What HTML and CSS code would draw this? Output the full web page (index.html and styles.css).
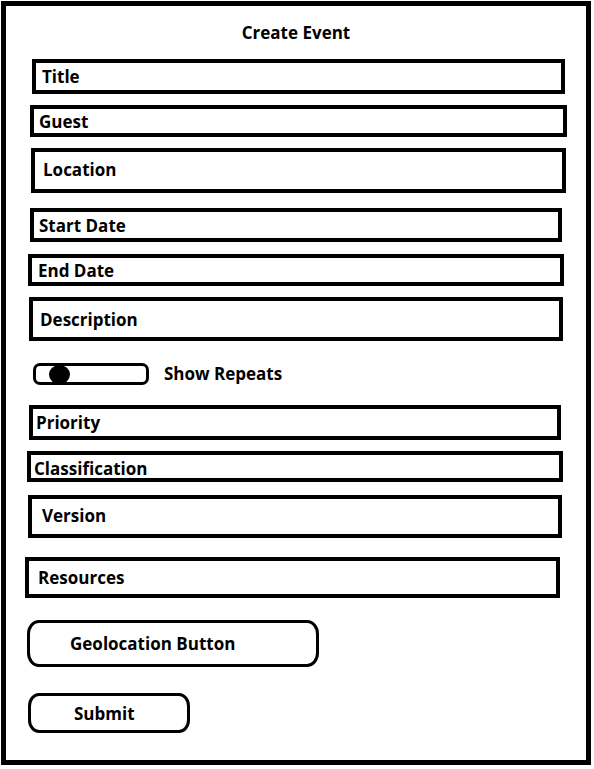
FILE: index.html
```html
<!DOCTYPE html>
<html lang="en">
<head>
<meta charset="utf-8">
<title>Create Event</title>
<link rel="stylesheet" href="styles.css">
</head>
<body>
<div class="frame">
  <div class="heading">Create Event</div>
  <div class="field f-title">Title</div>
  <div class="field f-guest">Guest</div>
  <div class="field f-location">Location</div>
  <div class="field f-start">Start Date</div>
  <div class="field f-end">End Date</div>
  <div class="field f-desc">Description</div>
  <div class="toggle-row">
    <div class="toggle"><span class="knob"></span></div>
    <span class="toggle-label">Show Repeats</span>
  </div>
  <div class="field f-priority">Priority</div>
  <div class="field f-class">Classification</div>
  <div class="field f-version">Version</div>
  <div class="field f-resources">Resources</div>
  <div class="btn b-geo">Geolocation Button</div>
  <div class="btn b-submit">Submit</div>
</div>
</body>
</html>
```
FILE: styles.css
```css
* { box-sizing: border-box; }
html, body { margin: 0; padding: 0; background: #fff; }
body {
  font-family: "Open Sans", "Liberation Sans", sans-serif;
  font-weight: 700;
  font-size: 17px;
  color: #000;
}
.frame {
  margin: 1px 0 0 1px;
  width: 590px;
  height: 764px;
  border: 5px solid #000;
  display: flex;
  flex-direction: column;
  align-items: flex-start;
}
.heading {
  align-self: stretch;
  text-align: center;
  padding-top: 15px;
  line-height: 23px;
}
.field {
  border: 4px solid #000;
  display: flex;
  align-items: center;
  line-height: 23px;
  white-space: nowrap;
}
.f-title { margin: 15px 0 0 26px; width: 533px; height: 35px; padding-left: 6px; }
.f-guest { margin: 11px 0 0 24px; width: 537px; height: 32px; padding-left: 5px; }
.f-location { margin: 11px 0 0 25px; width: 535px; height: 45px; padding-left: 8px; padding-bottom: 3px; }
.f-start { margin: 15px 0 0 24px; width: 532px; height: 34px; padding-left: 5px; }
.f-end { margin: 12px 0 0 22px; width: 536px; height: 32px; padding-left: 6px; }
.f-desc { margin: 11px 0 0 23px; width: 534px; height: 44px; padding-left: 7px; }
.f-priority { margin: 20px 0 0 23px; width: 532px; height: 35px; padding-left: 3px; }
.f-class { margin: 11px 0 0 21px; width: 536px; height: 31px; padding-left: 3px; padding-top: 4px; }
.f-version { margin: 13px 0 0 22px; width: 534px; height: 43px; padding-left: 10px; padding-bottom: 2px; }
.f-resources { margin: 19px 0 0 19px; width: 535px; height: 41px; padding-left: 9px; }

.toggle-row {
  margin: 22px 0 0 27px;
  display: flex;
  align-items: center;
  gap: 15px;
  height: 22px;
}
.toggle {
  width: 116px;
  height: 22px;
  border: 3px solid #000;
  border-radius: 7px;
  display: flex;
  align-items: center;
  padding-left: 13px;
}
.knob {
  width: 21px;
  height: 19px;
  border-radius: 50%;
  background: #000;
}
.toggle-label { line-height: 22px; }

.btn {
  border: 3px solid #000;
  display: flex;
  align-items: center;
  line-height: 23px;
  white-space: nowrap;
}
.b-geo {
  margin: 22px 0 0 21px;
  width: 292px;
  height: 47px;
  padding-left: 40px;
  border-radius: 12px / 14px;
}
.b-submit {
  margin: 26px 0 0 22px;
  width: 162px;
  height: 40px;
  padding-left: 43px;
  border-radius: 11px / 13px;
}
```
